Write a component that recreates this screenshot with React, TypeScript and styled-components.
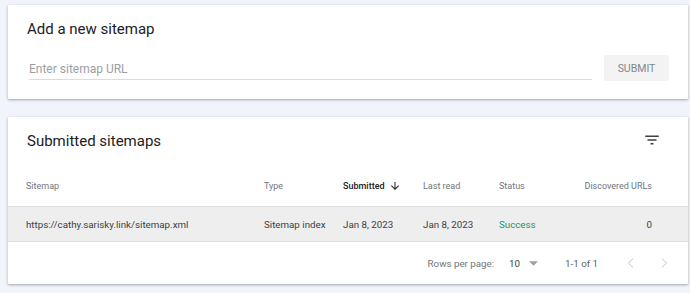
import React from 'react';
import styled, { createGlobalStyle } from 'styled-components';

const GlobalStyle = createGlobalStyle`
    html, body {
        margin: 0;
        padding: 0;
        background: #f1f4fa;
        font-family: Roboto, "Liberation Sans", Arial, sans-serif;
    }
`;

const Page = styled.div`
    display: flex;
    flex-direction: column;
    gap: 18px;
    padding: 5px 2px 9px 8px;
`;

const Card = styled.div<{ $flush?: boolean }>`
    background: #fff;
    border-radius: 1px;
    box-shadow: 0 1px 2px rgba(60, 64, 67, 0.3), 0 1px 3px 1px rgba(60, 64, 67, 0.1);
    padding: ${(p) => (p.$flush ? '14px 0 0' : '14px 19px 18px')};
`;

const TitleRow = styled.div`
    display: flex;
    justify-content: space-between;
    align-items: center;
    padding: 0 19px;
`;

const Title = styled.h2`
    margin: 0;
    font-size: 15px;
    line-height: 20px;
    font-weight: 400;
    color: #202124;
`;

const FormRow = styled.div`
    display: flex;
    align-items: flex-end;
    gap: 12px;
    margin-top: 16px;
`;

const Field = styled.div`
    flex: 1;
    margin: 0 0 1px 2px;
    padding-bottom: 2px;
    border-bottom: 1px solid #dadce0;
    font-size: 12px;
    line-height: 16px;
    color: #9aa0a6;
`;

const SubmitButton = styled.button`
    width: 65px;
    height: 26px;
    border: none;
    border-radius: 2px;
    background: #f3f3f3;
    color: #80868b;
    font-family: inherit;
    font-size: 10.5px;
    font-weight: 400;
    padding: 0;
`;

const FilterButton = styled.div`
    display: flex;
    margin: -2px 8px 0 0;
    color: #3c4043;
`;

const Grid = styled.div<{ $head?: boolean }>`
    display: grid;
    grid-template-columns: 238px 79px 80px 76px 1fr auto;
    align-items: center;
    height: ${(p) => (p.$head ? '40px' : '34px')};
    margin-top: ${(p) => (p.$head ? '15px' : '0')};
    padding: 0 36px 0 18px;
    border-bottom: 1px solid #e0e0e0;
    background: ${(p) => (p.$head ? '#fff' : '#eeeeee')};
    font-size: ${(p) => (p.$head ? '9px' : '9.75px')};
    color: ${(p) => (p.$head ? '#70757a' : '#3c4043')};
`;

const Cell = styled.div<{ $right?: boolean; $tone?: 'sorted' | 'ok' }>`
    display: flex;
    align-items: center;
    justify-content: ${(p) => (p.$right ? 'flex-end' : 'flex-start')};
    font-weight: ${(p) => (p.$tone === 'sorted' ? 500 : 400)};
    color: ${(p) =>
        p.$tone === 'sorted' ? '#202124' : p.$tone === 'ok' ? '#1e9460' : 'inherit'};
    white-space: nowrap;
`;

const SortIcon = styled.svg`
    margin-left: 4px;
`;

const Footer = styled.div`
    display: flex;
    justify-content: flex-end;
    align-items: center;
    height: 42px;
    padding-right: 15px;
    font-size: 9.75px;
    color: #70757a;
`;

const PerPage = styled.div`
    display: flex;
    align-items: center;
    margin-right: 27px;
    span {
        color: #3c4043;
        margin: 0 9px 0 15px;
    }
`;

const Range = styled.div`
    color: #5f6368;
    margin-right: 24px;
`;

const Pager = styled.div`
    display: flex;
    gap: 15px;
    color: #bdc1c6;
`;

const Chevron = ({ dir }: { dir: 'left' | 'right' }) => (
    <svg width="18" height="18" viewBox="0 0 24 24" fill="none" stroke="currentColor" strokeWidth="1.3">
        {dir === 'left' ? <polyline points="14.6,6.3 8.6,12 14.6,17.7" /> : <polyline points="9.4,6.3 15.4,12 9.4,17.7" />}
    </svg>
);

const App = () => (
    <Page>
        <GlobalStyle />
        <Card>
            <Title>Add a new sitemap</Title>
            <FormRow>
                <Field>Enter sitemap URL</Field>
                <SubmitButton>SUBMIT</SubmitButton>
            </FormRow>
        </Card>
        <Card $flush>
            <TitleRow>
                <Title>Submitted sitemaps</Title>
                <FilterButton>
                    <svg width="18" height="18" viewBox="0 0 24 24" fill="currentColor">
                        <path d="M10 18h4v-2h-4v2zM3 6v2h18V6H3zm3 7h12v-2H6v2z" />
                    </svg>
                </FilterButton>
            </TitleRow>
            <Grid $head>
                <Cell>Sitemap</Cell>
                <Cell>Type</Cell>
                <Cell $tone="sorted">
                    Submitted
                    <SortIcon width="12" height="12" viewBox="0 0 24 24" fill="currentColor">
                        <path d="M20 12l-1.41-1.41L13 16.17V4h-2v12.17l-5.58-5.59L4 12l8 8 8-8z" />
                    </SortIcon>
                </Cell>
                <Cell>Last read</Cell>
                <Cell>Status</Cell>
                <Cell $right>Discovered URLs</Cell>
            </Grid>
            <Grid>
                <Cell>https://cathy.sarisky.link/sitemap.xml</Cell>
                <Cell>Sitemap index</Cell>
                <Cell>Jan 8, 2023</Cell>
                <Cell>Jan 8, 2023</Cell>
                <Cell $tone="ok">Success</Cell>
                <Cell $right>0</Cell>
            </Grid>
            <Footer>
                <PerPage>
                    Rows per page:
                    <span>10</span>
                    <svg width="9" height="5" viewBox="0 0 10 5" fill="#9aa0a6">
                        <path d="M0 0l5 5 5-5z" />
                    </svg>
                </PerPage>
                <Range>1-1 of 1</Range>
                <Pager>
                    <Chevron dir="left" />
                    <Chevron dir="right" />
                </Pager>
            </Footer>
        </Card>
    </Page>
);

export default App;
